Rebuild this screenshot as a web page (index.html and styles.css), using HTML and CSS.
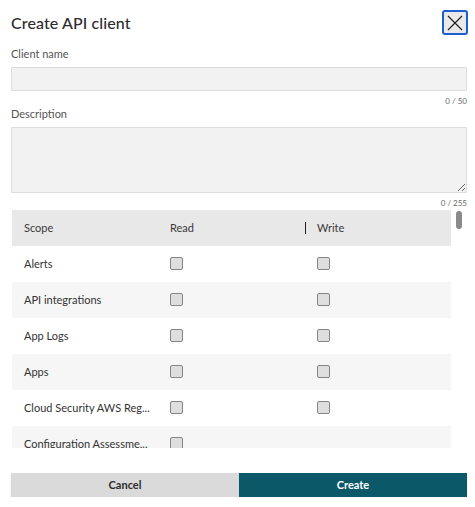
FILE: index.html
```html
<!DOCTYPE html>
<html lang="en">
<head>
<meta charset="utf-8">
<title>Create API client</title>
<link rel="stylesheet" href="styles.css">
</head>
<body>
<div class="dialog">
  <header class="dialog-header">
    <h1 class="title">Create API client</h1>
    <button class="close" aria-label="Close">
      <svg width="16" height="16" viewBox="0 0 16 16"><path d="M1 1L15 15M15 1L1 15" stroke="#1d1d1d" stroke-width="1.1" fill="none"/></svg>
    </button>
  </header>

  <label class="field-label">Client name</label>
  <input class="text-input" type="text">
  <div class="counter">0 / 50</div>

  <label class="field-label">Description</label>
  <textarea class="text-area"></textarea>
  <div class="counter">0 / 255</div>

  <div class="scope-wrap">
    <div class="scope-scroll">
      <div class="row head">
        <div class="cell">Scope</div>
        <div class="cell">Read</div>
        <div class="cell divided">Write</div>
      </div>
      <div class="row">
        <div class="cell">Alerts</div>
        <div class="cell"><span class="cb"></span></div>
        <div class="cell"><span class="cb"></span></div>
      </div>
      <div class="row alt">
        <div class="cell">API integrations</div>
        <div class="cell"><span class="cb"></span></div>
        <div class="cell"><span class="cb"></span></div>
      </div>
      <div class="row">
        <div class="cell">App Logs</div>
        <div class="cell"><span class="cb"></span></div>
        <div class="cell"><span class="cb"></span></div>
      </div>
      <div class="row alt">
        <div class="cell">Apps</div>
        <div class="cell"><span class="cb"></span></div>
        <div class="cell"><span class="cb"></span></div>
      </div>
      <div class="row">
        <div class="cell">Cloud Security AWS Reg...</div>
        <div class="cell"><span class="cb"></span></div>
        <div class="cell"><span class="cb"></span></div>
      </div>
      <div class="row alt">
        <div class="cell">Configuration Assessme...</div>
        <div class="cell"><span class="cb"></span></div>
        <div class="cell"></div>
      </div>
    </div>
    <div class="track"><div class="thumb"></div></div>
  </div>

  <div class="actions">
    <button class="btn cancel">Cancel</button>
    <button class="btn create">Create</button>
  </div>
</div>
</body>
</html>
```

FILE: styles.css
```css
* { box-sizing: border-box; }
html, body { margin: 0; background: #fff; }
body {
  font-family: "Lato", "Noto Sans", sans-serif;
  color: #333;
}
.dialog {
  padding: 10px 8px 0 11px;
  display: flex;
  flex-direction: column;
}
.dialog-header {
  display: flex;
  justify-content: space-between;
  align-items: center;
  height: 25px;
}
.title {
  margin: 0;
  font-size: 16px;
  font-weight: 500;
  color: #2d2d2d;
  letter-spacing: 0.1px;
}
.close {
  width: 26px;
  height: 25px;
  margin-right: -1px;
  padding: 0;
  border: 2px solid #1b5fd1;
  border-radius: 3px;
  background: #e9e9e9;
  display: flex;
  align-items: center;
  justify-content: center;
}
.field-label {
  display: block;
  font-size: 11px;
  line-height: 14px;
  color: #555;
  margin-top: 12px;
}
.text-input {
  margin-top: 6px;
  height: 24px;
  width: 100%;
  background: #f2f2f2;
  border: 1px solid #dcdcdc;
  border-radius: 1px;
  padding: 0 6px;
}
.text-area {
  margin-top: 6px;
  height: 66px;
  width: 100%;
  background: #f2f2f2;
  border: 1px solid #dcdcdc;
  border-radius: 1px;
  resize: vertical;
  display: block;
}
.counter {
  text-align: right;
  font-size: 8px;
  line-height: 10px;
  color: #666;
  margin-top: 5px;
}
.counter + .field-label { margin-top: 1px; }
.scope-wrap {
  margin-top: 2px;
  margin-left: 1px;
  display: flex;
  height: 238px;
  overflow: hidden;
}
.scope-scroll {
  width: 439px;
  flex: none;
}
.row {
  display: grid;
  grid-template-columns: 146px 147px 146px;
  height: 36px;
  align-items: center;
  font-size: 11px;
  color: #333;
}
.row.head { background: #e8e8e8; color: #3a3a3a; }
.row.alt { background: #f6f6f6; }
.cell {
  padding-left: 12px;
  padding-bottom: 2px;
  white-space: nowrap;
  display: flex;
  align-items: center;
  height: 100%;
}
.cell .cb { margin-top: 1px; }
.divided { position: relative; }
.divided::before {
  content: "";
  position: absolute;
  left: 0;
  top: 12px;
  width: 1px;
  height: 12px;
  background: #222;
}
.cb {
  width: 13px;
  height: 13px;
  background: #dedede;
  border: 1px solid #858585;
  border-radius: 2px;
  display: block;
}
.track {
  width: 12px;
  padding: 1px 1px 0 5px;
}
.thumb {
  width: 6px;
  height: 18px;
  border-radius: 3px;
  background: #8a8a8a;
}
.actions {
  display: flex;
  margin-top: 25px;
  box-shadow: 0 1px 2px rgba(0,0,0,0.12);
}
.btn {
  flex: 1;
  height: 24px;
  border: none;
  font-family: inherit;
  font-size: 11px;
  font-weight: 700;
  padding: 0 0 2px;
  border-radius: 0;
}
.btn.cancel { background: #dadada; color: #2c2c2c; }
.btn.create { background: #0b5968; color: #fff; }
```
